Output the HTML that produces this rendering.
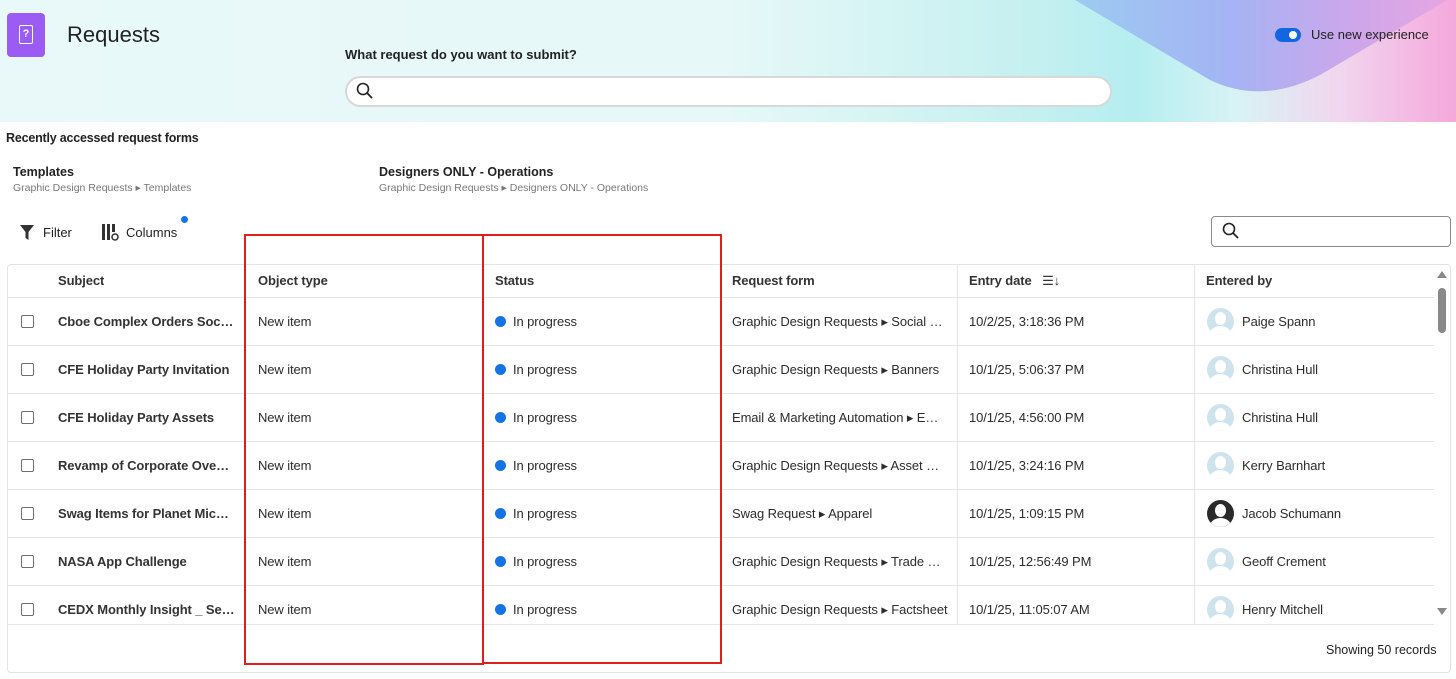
<!DOCTYPE html>
<html><head><meta charset="utf-8"><style>
*{box-sizing:border-box;margin:0;padding:0}
body{width:1456px;height:679px;overflow:hidden;background:#fff;font-family:"Liberation Sans",sans-serif;color:#222;position:relative;font-size:13px}
.hdr{position:absolute;left:0;top:0;width:1456px;height:122px;background:linear-gradient(90deg,#e9f9f9 0%,#e6f8f8 50%,#c7f0f0 70%,#b5eef0 78%,#d8f3f5 85%,#f1d6ee 92%,#f5a8dc 100%);overflow:hidden}
.abs{position:absolute}
.row{position:absolute;left:8px;width:1426px;height:48px;border-bottom:1px solid #e6e6e6}
.c{position:absolute;top:0;line-height:47px;white-space:nowrap;overflow:hidden;text-overflow:ellipsis;font-size:13px;color:#2c2c2c;letter-spacing:-0.1px}
.b{font-weight:bold;color:#333}
.cb{position:absolute;left:13px;top:17px;width:13px;height:13px;border:1.5px solid #6e6e6e;border-radius:2px}
.dot{display:inline-block;width:11px;height:11px;border-radius:50%;background:#1473e6;margin-right:7px;vertical-align:-1px}
.av{position:absolute;left:1199px;top:10px;width:27px;height:27px;border-radius:50%;background:#cfe3ef;overflow:hidden}
.av:before{content:"";position:absolute;left:8px;top:4px;width:11px;height:13px;border-radius:50%;background:#fff}
.av:after{content:"";position:absolute;left:3px;top:18px;width:21px;height:16px;border-radius:50%;background:#fff}
.vl{position:absolute;top:264px;width:1px;height:361px;background:#e6e6e6}
.sub{font-size:10.5px;color:#777}
</style></head><body>
<div class="hdr">
<svg class="abs" style="left:0;top:0" width="1456" height="122"><defs><linearGradient id="w" x1="0" x2="1"><stop offset="0" stop-color="#9ccbf0"/><stop offset=".4" stop-color="#a4b4f4"/><stop offset=".75" stop-color="#cfa6ea"/><stop offset="1" stop-color="#e8a6e0"/></linearGradient></defs>
<path d="M1075 0 L1210 80 Q1262 105 1320 75 L1456 -5 L1456 0 Z" fill="url(#w)"/></svg>
<div class="abs" style="left:7px;top:13px;width:38px;height:44px;background:#9b5cf3;border-radius:4px"></div>
<div class="abs" style="left:19px;top:25px;width:14px;height:19px;border:1.5px solid #fff;border-radius:2px;color:#fff;font-size:11px;font-weight:bold;text-align:center;line-height:16px">?</div>
<div class="abs" style="left:67px;top:22px;font-size:22px;color:#222">Requests</div>
<div class="abs b" style="left:345px;top:47px;font-size:13px;color:#222">What request do you want to submit?</div>
<div class="abs" style="left:345px;top:76px;width:767px;height:31px;background:#fff;border:2px solid #d8d8d8;border-radius:16px"></div>
<svg class="abs" style="left:356px;top:82px" width="18" height="18"><circle cx="7" cy="7" r="5.5" fill="none" stroke="#222" stroke-width="1.6"/><path d="M11 11 L16 16" stroke="#222" stroke-width="1.8"/></svg>
<div class="abs" style="left:1275px;top:28px;width:26px;height:14px;border-radius:7px;background:#1266e0"></div>
<div class="abs" style="left:1289px;top:31px;width:8px;height:8px;border-radius:50%;background:#fff"></div>
<div class="abs" style="left:1311px;top:27px;font-size:13px;color:#222">Use new experience</div>
</div>
<div class="abs b" style="left:6px;top:131px;font-size:12.5px;color:#222;letter-spacing:-0.2px">Recently accessed request forms</div>
<div class="abs b" style="left:13px;top:165px;font-size:12.5px;color:#222">Templates</div>
<div class="abs sub" style="left:13px;top:182px">Graphic Design Requests ▸ Templates</div>
<div class="abs b" style="left:379px;top:165px;font-size:12.5px;color:#222">Designers ONLY - Operations</div>
<div class="abs sub" style="left:379px;top:182px">Graphic Design Requests ▸ Designers ONLY - Operations</div>
<svg class="abs" style="left:19px;top:224px" width="16" height="17"><path d="M1 1 H15 L9.5 8 V16 L6.5 14 V8 Z" fill="#333"/></svg>
<div class="abs" style="left:43px;top:225px;font-size:13px">Filter</div>
<svg class="abs" style="left:101px;top:223px" width="20" height="19"><rect x="1" y="1" width="3" height="16" fill="#333"/><rect x="6" y="1" width="3" height="16" fill="#333"/><rect x="11" y="1" width="3" height="8" fill="#333"/><circle cx="14" cy="14" r="3" fill="none" stroke="#333" stroke-width="1.5"/></svg>
<div class="abs" style="left:126px;top:225px;font-size:13px">Columns</div>
<div class="abs" style="left:181px;top:216px;width:7px;height:7px;border-radius:50%;background:#1473e6"></div>
<div class="abs" style="left:1211px;top:216px;width:240px;height:31px;border:1px solid #8a8a8a;border-radius:4px"></div>
<svg class="abs" style="left:1222px;top:222px" width="18" height="18"><circle cx="7" cy="7" r="5.5" fill="none" stroke="#222" stroke-width="1.6"/><path d="M11 11 L16 16" stroke="#222" stroke-width="1.8"/></svg>
<div class="abs" style="left:7px;top:264px;width:1444px;height:409px;border:1px solid #e3e3e3;border-radius:4px"></div>
<div class="row" style="top:265px;height:33px"><div class="c b" style="left:50px;line-height:32px">Subject</div><div class="c b" style="left:250px;line-height:32px">Object type</div><div class="c b" style="left:487px;line-height:32px">Status</div><div class="c b" style="left:724px;line-height:32px">Request form</div><div class="c b" style="left:961px;line-height:32px">Entry date &nbsp; <span style="font-weight:normal">☰↓</span></div><div class="c b" style="left:1198px;line-height:32px">Entered by</div></div>
<div class="vl" style="left:245px"></div><div class="vl" style="left:483px"></div><div class="vl" style="left:721px"></div><div class="vl" style="left:957px"></div><div class="vl" style="left:1194px"></div>
<div class="row" style="top:298px"><div class="cb"></div><div class="c b" style="left:50px;width:178px">Cboe Complex Orders Social Media</div><div class="c" style="left:250px">New item</div><div class="c" style="left:487px"><span class="dot"></span>In progress</div><div class="c" style="left:724px;width:216px">Graphic Design Requests ▸ Social Media</div><div class="c" style="left:961px">10/2/25, 3:18:36 PM</div><div class="av"></div><div class="c" style="left:1234px">Paige Spann</div></div>
<div class="row" style="top:346px"><div class="cb"></div><div class="c b" style="left:50px;width:172px">CFE Holiday Party Invitation</div><div class="c" style="left:250px">New item</div><div class="c" style="left:487px"><span class="dot"></span>In progress</div><div class="c" style="left:724px">Graphic Design Requests ▸ Banners</div><div class="c" style="left:961px">10/1/25, 5:06:37 PM</div><div class="av"></div><div class="c" style="left:1234px">Christina Hull</div></div>
<div class="row" style="top:394px"><div class="cb"></div><div class="c b" style="left:50px">CFE Holiday Party Assets</div><div class="c" style="left:250px">New item</div><div class="c" style="left:487px"><span class="dot"></span>In progress</div><div class="c" style="left:724px;width:210px">Email &amp; Marketing Automation ▸ Email</div><div class="c" style="left:961px">10/1/25, 4:56:00 PM</div><div class="av"></div><div class="c" style="left:1234px">Christina Hull</div></div>
<div class="row" style="top:442px"><div class="cb"></div><div class="c b" style="left:50px;width:172px">Revamp of Corporate Overview</div><div class="c" style="left:250px">New item</div><div class="c" style="left:487px"><span class="dot"></span>In progress</div><div class="c" style="left:724px;width:216px">Graphic Design Requests ▸ Asset Update</div><div class="c" style="left:961px">10/1/25, 3:24:16 PM</div><div class="av"></div><div class="c" style="left:1234px">Kerry Barnhart</div></div>
<div class="row" style="top:490px"><div class="cb"></div><div class="c b" style="left:50px;width:172px">Swag Items for Planet Microcap</div><div class="c" style="left:250px">New item</div><div class="c" style="left:487px"><span class="dot"></span>In progress</div><div class="c" style="left:724px">Swag Request ▸ Apparel</div><div class="c" style="left:961px">10/1/25, 1:09:15 PM</div><div class="av" style="background:#2a2a2a"></div><div class="c" style="left:1234px">Jacob Schumann</div></div>
<div class="row" style="top:538px"><div class="cb"></div><div class="c b" style="left:50px">NASA App Challenge</div><div class="c" style="left:250px">New item</div><div class="c" style="left:487px"><span class="dot"></span>In progress</div><div class="c" style="left:724px;width:212px">Graphic Design Requests ▸ Trade Fair</div><div class="c" style="left:961px">10/1/25, 12:56:49 PM</div><div class="av"></div><div class="c" style="left:1234px">Geoff Crement</div></div>
<div class="row" style="top:586px;height:39px"><div class="cb"></div><div class="c b" style="left:50px;width:178px">CEDX Monthly Insight _ September</div><div class="c" style="left:250px">New item</div><div class="c" style="left:487px"><span class="dot"></span>In progress</div><div class="c" style="left:724px;width:216px">Graphic Design Requests ▸ Factsheet</div><div class="c" style="left:961px">10/1/25, 11:05:07 AM</div><div class="av"></div><div class="c" style="left:1234px">Henry Mitchell</div></div>
<div class="abs" style="left:1437px;top:271px;width:0;height:0;border-left:5px solid transparent;border-right:5px solid transparent;border-bottom:7px solid #888"></div>
<div class="abs" style="left:1438px;top:288px;width:8px;height:45px;border-radius:4px;background:#888"></div>
<div class="abs" style="left:1437px;top:608px;width:0;height:0;border-left:5px solid transparent;border-right:5px solid transparent;border-top:7px solid #888"></div>
<div class="abs" style="left:1326px;top:643px;font-size:12.5px">Showing 50 records</div>
<div class="abs" style="left:244px;top:234px;width:240px;height:431px;border:2px solid #e01e1e"></div>
<div class="abs" style="left:482px;top:234px;width:240px;height:430px;border:2px solid #e01e1e"></div>
</body></html>
